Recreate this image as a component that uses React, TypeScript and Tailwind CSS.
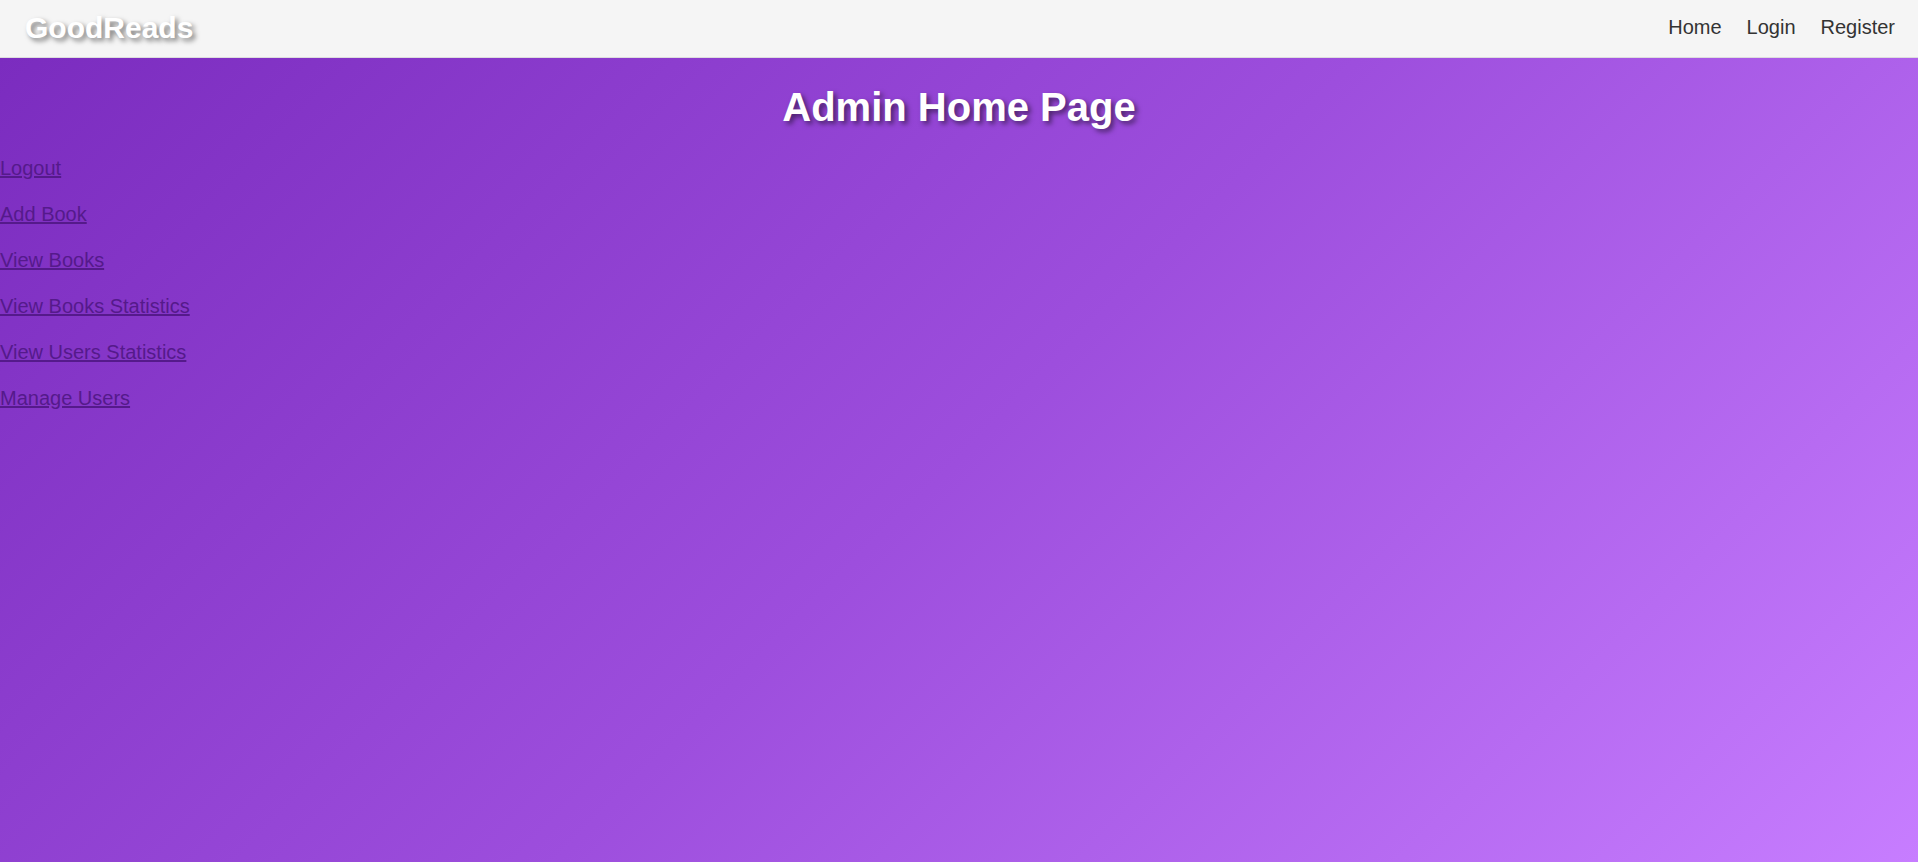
const navLinks = ["Home", "Login", "Register"];

const adminLinks = [
  "Logout",
  "Add Book",
  "View Books",
  "View Books Statistics",
  "View Users Statistics",
  "Manage Users",
];

export default function App() {
  return (
    <div className="flex min-h-screen flex-col font-['Liberation_Sans',Arial,sans-serif] text-xl/[23px]">
      <header className="flex h-[58px] items-center justify-between border-b border-[#dddddd] bg-[#f5f5f5] pr-[23px] pb-0.5 pl-[25px]">
        <a
          href="#"
          className="text-3xl/[34px] font-bold text-white [text-shadow:3px_3px_5px_rgba(0,0,0,0.5)]"
        >
          GoodReads
        </a>
        <nav>
          <ul className="flex gap-[25px]">
            {navLinks.map((label) => (
              <li key={label}>
                <a href="#" className="text-[#333333]">
                  {label}
                </a>
              </li>
            ))}
          </ul>
        </nav>
      </header>
      <main className="flex-1 bg-[linear-gradient(135deg,#7b2cbf,#9d4edd,#c77dff)]">
        <h1 className="pt-[26px] pb-[27px] text-center text-[40px]/[46px] font-bold text-white [text-shadow:3px_3px_5px_rgba(0,0,0,0.5)]">
          Admin Home Page
        </h1>
        <ul className="flex flex-col gap-[23px]">
          {adminLinks.map((label) => (
            <li key={label}>
              <a href="#" className="text-[#551a8b] underline">
                {label}
              </a>
            </li>
          ))}
        </ul>
      </main>
    </div>
  );
}
